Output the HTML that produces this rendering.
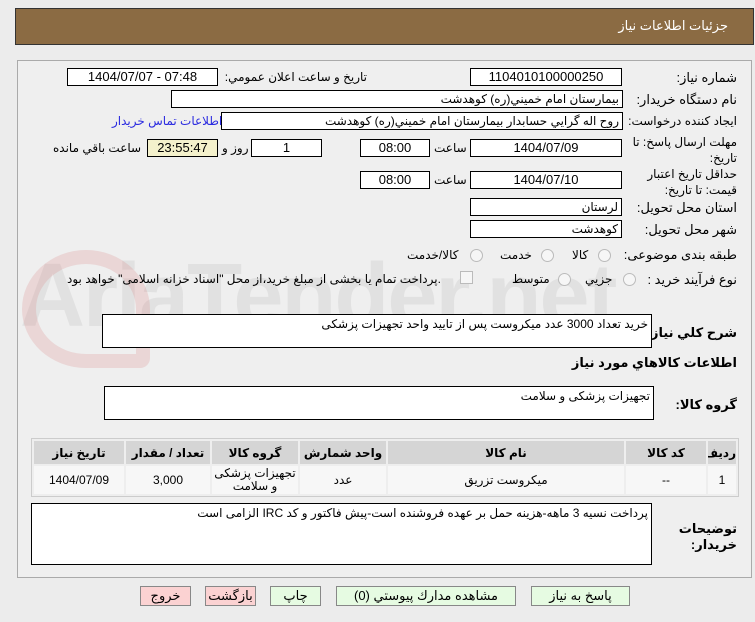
<!DOCTYPE html>
<html><head><meta charset="utf-8"><style>
body{margin:0;width:755px;height:622px;background:#ececec;font-family:"Liberation Sans","DejaVu Sans",sans-serif;font-size:12px;color:#000;position:relative;overflow:hidden}
.a{position:absolute;white-space:nowrap}
.in{position:absolute;background:#fff;border:1px solid #000;height:16px;line-height:16px;text-align:center;box-sizing:content-box;font-size:13px}
.r{text-align:right;padding-right:3px;font-size:12px}
.lb{position:absolute;text-align:right;direction:rtl;white-space:nowrap;font-size:13px}
.rad{position:absolute;width:11px;height:11px;border-radius:50%;border:1px solid #bbb;background:#f6f6f6}
.ta{position:absolute;background:#fff;border:1px solid #000;direction:rtl;text-align:right;padding:2px 3px;box-sizing:border-box}
.btn{position:absolute;top:586px;height:18px;border:1px solid #888;line-height:18px;text-align:center;background:#e6fbe2;font-size:13px}
table{border-collapse:separate;border-spacing:2px;table-layout:fixed}
td{padding:0;overflow:hidden}
</style></head><body>
<div class="a" style="left:15px;top:8px;width:737px;height:35px;background:#8b6b43;border:1px solid #333"></div>
<div class="a" style="right:27px;top:18px;color:#fff;font-size:13px">جزئيات اطلاعات نياز</div>
<div class="a" style="left:17px;top:60px;width:733px;height:516px;border:1px solid #aaa;background:#efefef"></div>
<div class="a" style="left:20px;top:245px;font-size:90px;font-weight:bold;color:rgba(200,200,200,0.35);letter-spacing:-2px">AriaTender.net</div>
<div class="a" style="left:22px;top:250px;width:100px;height:90px;border:14px solid rgba(220,140,140,0.25);border-radius:50% 50% 10px 50%"></div>

<div class="lb" style="right:18px;top:70px">شماره نياز:</div>
<div class="in" style="left:470px;top:68px;width:150px">1104010100000250</div>
<div class="lb" style="right:388px;top:70px;font-size:12px">تاريخ و ساعت اعلان عمومي:</div>
<div class="in" style="left:67px;top:68px;width:149px">1404/07/07 - 07:48</div>

<div class="lb" style="right:18px;top:92px">نام دستگاه خريدار:</div>
<div class="in r" style="left:171px;top:90px;width:447px">بيمارستان امام خميني(ره) كوهدشت</div>

<div class="lb" style="right:18px;top:114px;font-size:12px">ايجاد كننده درخواست:</div>
<div class="in r" style="left:221px;top:112px;width:397px">روح اله گرايي حسابدار بيمارستان امام خميني(ره) كوهدشت</div>
<div class="a" style="left:112px;top:114px;color:#2a2ae0">اطلاعات تماس خريدار</div>

<div class="lb" style="right:18px;top:134px;line-height:16px;font-size:12px">مهلت ارسال پاسخ: تا<br>تاريخ:</div>
<div class="in" style="left:470px;top:139px;width:150px">1404/07/09</div>
<div class="a" style="left:434px;top:141px">ساعت</div>
<div class="in" style="left:360px;top:139px;width:68px">08:00</div>
<div class="in" style="left:251px;top:139px;width:69px">1</div>
<div class="a" style="left:222px;top:141px">روز و</div>
<div class="in" style="left:147px;top:139px;width:69px;background:#f4f1cc">23:55:47</div>
<div class="a" style="left:53px;top:141px">ساعت باقي مانده</div>

<div class="lb" style="right:18px;top:166px;line-height:16px;font-size:12px">حداقل تاريخ اعتبار<br>قيمت: تا تاريخ:</div>
<div class="in" style="left:470px;top:171px;width:150px">1404/07/10</div>
<div class="a" style="left:434px;top:173px">ساعت</div>
<div class="in" style="left:360px;top:171px;width:68px">08:00</div>

<div class="lb" style="right:18px;top:200px">استان محل تحويل:</div>
<div class="in r" style="left:470px;top:198px;width:147px">لرستان</div>
<div class="lb" style="right:18px;top:222px">شهر محل تحويل:</div>
<div class="in r" style="left:470px;top:220px;width:147px">كوهدشت</div>

<div class="lb" style="right:18px;top:247px">طبقه بندی موضوعی:</div>
<div class="rad" style="left:598px;top:249px"></div><div class="a" style="left:572px;top:248px">كالا</div>
<div class="rad" style="left:541px;top:249px"></div><div class="a" style="left:500px;top:248px">خدمت</div>
<div class="rad" style="left:470px;top:249px"></div><div class="a" style="left:407px;top:248px">كالا/خدمت</div>

<div class="lb" style="right:18px;top:272px">نوع فرآيند خريد :</div>
<div class="rad" style="left:623px;top:273px"></div><div class="a" style="left:585px;top:272px">جزيي</div>
<div class="rad" style="left:558px;top:273px"></div><div class="a" style="left:512px;top:272px">متوسط</div>
<div class="a" style="left:460px;top:271px;width:11px;height:11px;border:1px solid #bbb;background:#f6f6f6"></div>
<div class="a" style="left:67px;top:272px">پرداخت تمام يا بخشی از مبلغ خريد،از محل "اسناد خزانه اسلامی" خواهد بود.</div>

<div class="lb" style="right:18px;top:325px;font-weight:bold">شرح كلي نياز:</div>
<div class="ta" style="left:102px;top:314px;width:550px;height:34px">خريد تعداد 3000 عدد ميكروست پس از تاييد واحد تجهيزات پزشكی</div>
<div class="lb" style="right:18px;top:355px;font-weight:bold">اطلاعات كالاهاي مورد نياز</div>
<div class="lb" style="right:18px;top:397px;font-weight:bold">گروه كالا:</div>
<div class="ta" style="left:104px;top:386px;width:550px;height:34px">تجهيزات پزشكی و سلامت</div>

<div class="a" style="left:31px;top:438px;width:706px;height:57px;border:1px solid #ccc;background:#eee"></div>
<table class="a" style="left:32px;top:439px;width:706px;direction:rtl;font-size:12px">
<colgroup><col style="width:28px"><col style="width:80px"><col style="width:236px"><col style="width:86px"><col style="width:86px"><col style="width:84px"><col></colgroup>
<tr style="background:#d5d5d5;font-weight:bold;height:23px;text-align:center">
<td>رديف</td><td>كد كالا</td><td>نام كالا</td><td>واحد شمارش</td><td>گروه كالا</td><td>تعداد / مقدار</td><td>تاريخ نياز</td></tr>
<tr style="background:#f7f7f7;height:28px;text-align:center">
<td>1</td><td>--</td><td>ميكروست تزريق</td><td>عدد</td><td style="line-height:13px;white-space:normal">تجهيزات پزشكی و سلامت</td><td>3,000</td><td>1404/07/09</td></tr>
</table>

<div class="lb" style="right:18px;top:521px;font-weight:bold;line-height:16px">توضيحات<br>خريدار:</div>
<div class="ta" style="left:31px;top:503px;width:621px;height:62px">پرداخت نسيه 3 ماهه-هزينه حمل بر عهده فروشنده است-پيش فاكتور و كد IRC الزامی است</div>

<div class="btn" style="left:531px;width:97px">پاسخ به نياز</div>
<div class="btn" style="left:336px;width:178px">مشاهده مدارك پيوستي (0)</div>
<div class="btn" style="left:270px;width:49px">چاپ</div>
<div class="btn" style="left:205px;width:49px;background:#fbd2d2">بازگشت</div>
<div class="btn" style="left:140px;width:49px;background:#fbd2d2">خروج</div>
</body></html>
